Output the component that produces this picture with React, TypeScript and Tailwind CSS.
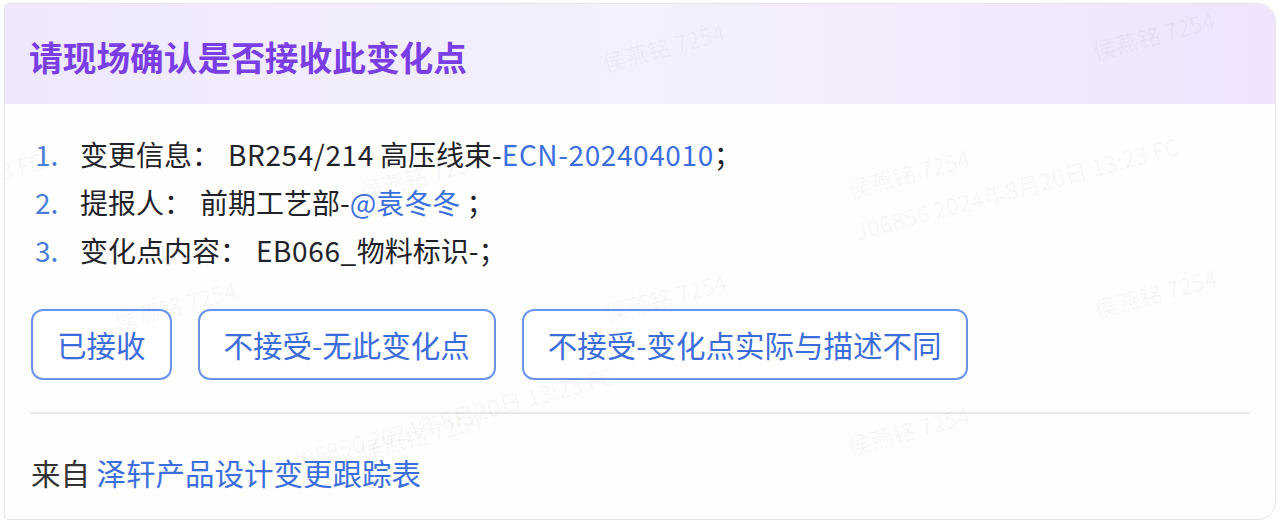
import React from 'react';

const FONT = { fontFamily: '"Noto Sans CJK SC", "Noto Sans", sans-serif' };

const items = [
  {
    label: '变更信息：',
    content: (
      <>
        <span className="tracking-[0.6px]">BR254/214</span> 高压线束-
        <span className="tracking-[0.6px] text-[#3b6fe0]">ECN-202404010</span>；
      </>
    ),
  },
  {
    label: '提报人：',
    content: (
      <>
        前期工艺部-<span className="text-[#3b6fe0]">@袁冬冬</span> ；
      </>
    ),
  },
  {
    label: '变化点内容：',
    content: (
      <>
        <span className="tracking-[0.6px]">EB066_</span>物料标识-；
      </>
    ),
  },
];

const actions = ['已接收', '不接受-无此变化点', '不接受-变化点实际与描述不同'];

type MarkProps = { text: string; left: number; top: number };

const marks: MarkProps[] = [
  { text: '侯燕铭 7254', left: 598, top: 42 },
  { text: '侯燕铭 7254', left: 1088, top: 30 },
  { text: '侯燕铭 7254', left: 355, top: 170 },
  { text: '侯燕铭 7254', left: 843, top: 168 },
  { text: 'J06856 2024年8月20日 13:23 FC', left: 850, top: 210 },
  { text: 'J06856 2024年8月20日 13:23 FC', left: -285, top: 225 },
  { text: '侯燕铭 7254', left: 110, top: 300 },
  { text: '侯燕铭 7254', left: 600, top: 292 },
  { text: '侯燕铭 7254', left: 1090, top: 288 },
  { text: 'J06856 2024年8月20日 13:23 FC', left: 285, top: 440 },
  { text: '侯燕铭 7254', left: 355, top: 430 },
  { text: '侯燕铭 7254', left: 843, top: 425 },
];

function Watermark({ text, left, top }: MarkProps) {
  return (
    <span
      className="pointer-events-none absolute origin-left -rotate-[15deg] whitespace-nowrap text-[23px] text-black/[0.045]"
      style={{ left, top }}
    >
      {text}
    </span>
  );
}

export default function App() {
  return (
    <div className="h-[522px] w-[1280px] overflow-hidden bg-white pt-[3px] pl-[4px]" style={FONT}>
      <div className="relative flex h-[517px] w-[1272px] flex-col overflow-hidden rounded-l-[4px] rounded-r-[18px] border border-[#e6e6e8] bg-[#fefefc]">
        <div className="flex h-[100px] shrink-0 items-center bg-gradient-to-r from-[#efe8fd] via-[#f4f0fd] to-[#efe4fc] px-[24px] pt-[6px]">
          <h1 className="text-[33.7px] font-bold leading-none text-[#7a3ee6]">请现场确认是否接收此变化点</h1>
        </div>

        <div className="flex flex-1 flex-col px-[26px]">
          <ol className="mt-[26px] flex flex-col text-[28px] leading-[48px] text-[#1f2329]">
            {items.map((item, i) => (
              <li key={i} className="flex whitespace-nowrap">
                <span className="w-[49px] shrink-0 pl-[4px] text-[#4a7ddc]">{i + 1}.</span>
                <span>{item.label}</span>
                <span className="pl-[8px]">{item.content}</span>
              </li>
            ))}
          </ol>

          <div className="mt-[35px] flex gap-[26px]">
            {actions.map((a) => (
              <button
                key={a}
                className="flex h-[71px] items-center rounded-[12px] border-2 border-[#6a95ee] bg-white/60 px-[24px] text-[29.5px] text-[#3a6cdb]"
              >
                {a}
              </button>
            ))}
          </div>

          <div className="mt-[32px] h-[2px] bg-[#e8e8e8]" />

          <div className="mt-[44px] text-[29.5px] leading-none text-[#333]">
            来自 <span className="text-[#3b6fe0]">泽轩产品设计变更跟踪表</span>
          </div>
        </div>

        {marks.map((m, i) => (
          <Watermark key={i} {...m} />
        ))}
      </div>
    </div>
  );
}
